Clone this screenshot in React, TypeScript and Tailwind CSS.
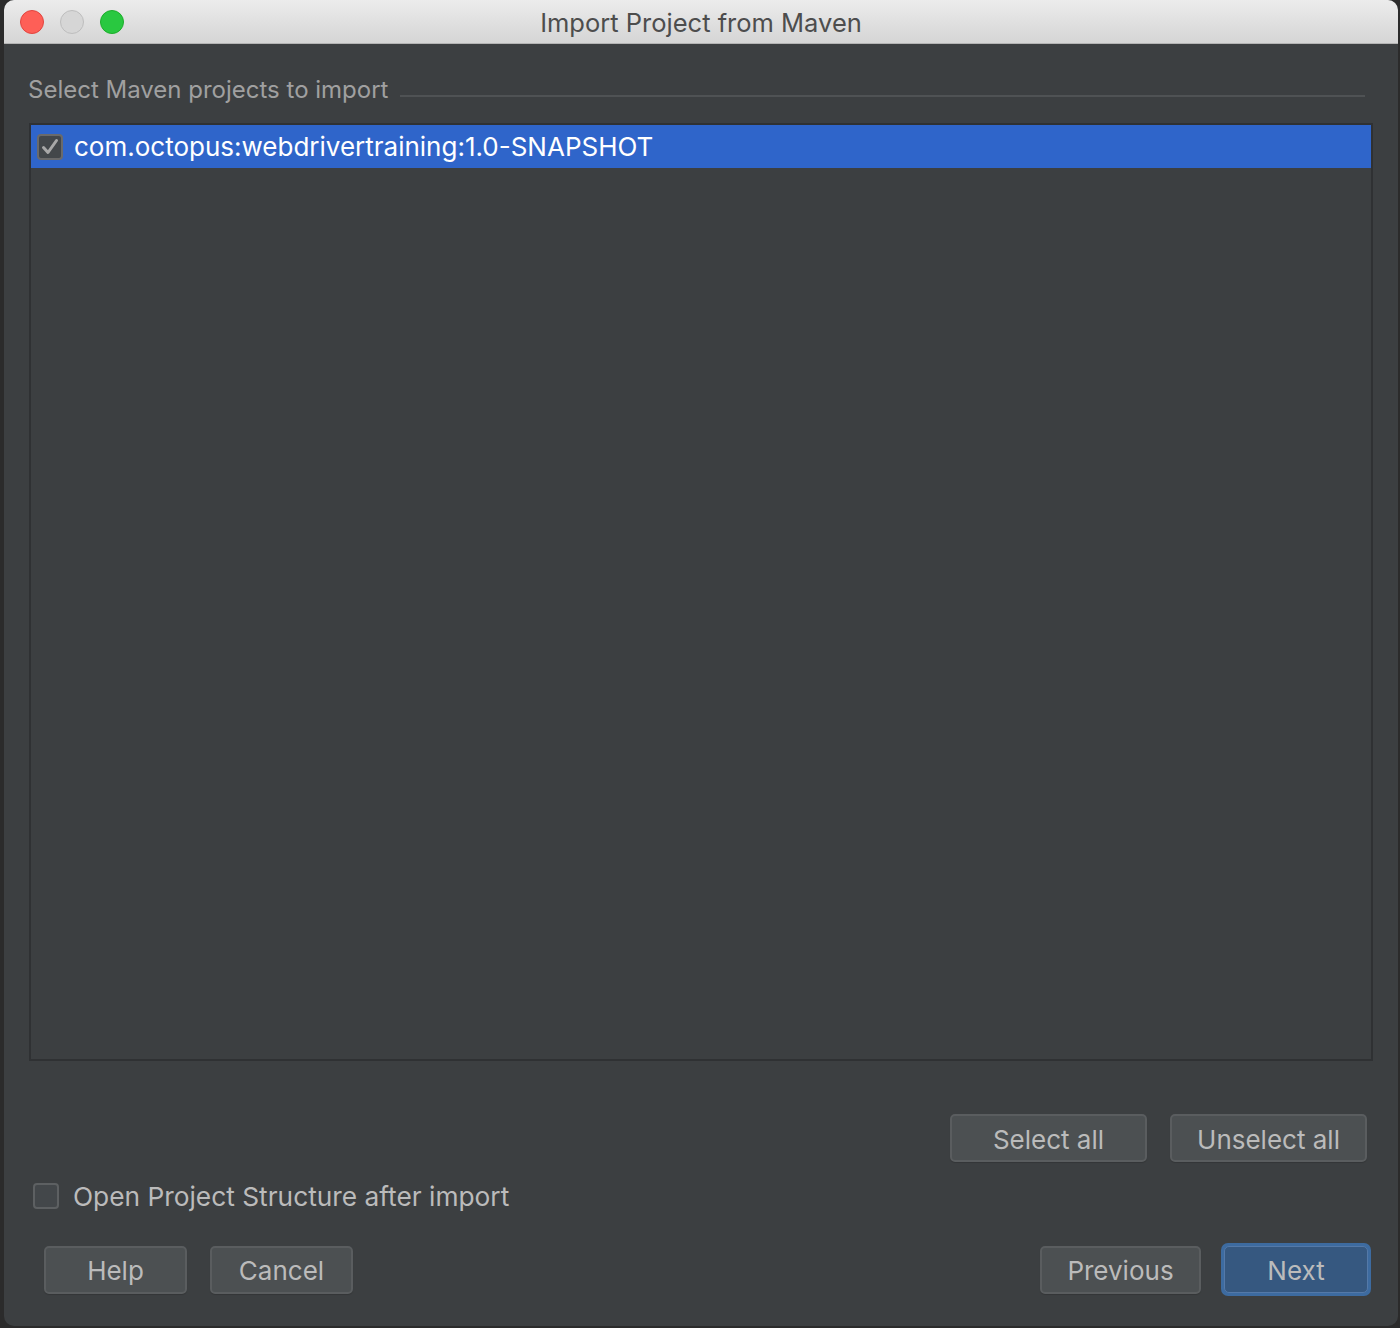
import React, { useState } from 'react';

const font = { fontFamily: 'Inter, "Noto Sans", "Liberation Sans", sans-serif' };

const Button = ({ label, width, primary }: { label: string; width: string; primary?: boolean }) => {
  if (primary) {
    return (
      <div className="rounded-[7px] bg-[#3d6ba0] p-[3px]">
        <button
          className={`${width} h-[47px] pt-[3px] rounded-[5px] border border-[#5479a8] bg-[#365880] text-[26px] text-[#bbbbbb] leading-none`}
        >
          {label}
        </button>
      </div>
    );
  }
  return (
    <button
      className={`${width} h-[48px] pt-[3px] rounded-[5px] border-2 border-[#5a5d5f] bg-[#4c5052] text-[26px] text-[#bbbbbb] leading-none shadow-[0_1px_1px_rgba(0,0,0,0.15)]`}
    >
      {label}
    </button>
  );
};

const Check = ({ checked }: { checked: boolean }) => (
  <div
    className={`w-[26px] h-[26px] rounded-[4px] border-2 flex items-center justify-center ${
      checked ? 'border-[#6a6a6a] bg-[#43474a]' : 'border-[#5d6062] bg-[#43474a]'
    }`}
  >
    {checked && (
      <svg width="18" height="18" viewBox="0 0 18 18">
        <path d="M2.5 9.5 L7 14.5 L15.5 2.5" fill="none" stroke="#a8a8a8" strokeWidth="3" strokeLinecap="round" strokeLinejoin="round" />
      </svg>
    )}
  </div>
);

export default function App() {
  const [openStructure] = useState(false);

  return (
    <div className="w-[1400px] h-[1328px] bg-[#2b2b2b] overflow-hidden" style={font}>
      <div className="ml-[4px] w-[1394px] h-[1326px] rounded-[10px] overflow-hidden bg-[#3c3f41] flex flex-col">
        {/* Title bar */}
        <div className="relative h-[44px] shrink-0 bg-gradient-to-b from-[#ececec] to-[#d5d5d5] border-b border-[#b4b4b4] flex items-center">
          <div className="flex items-center gap-[16px] pl-[16px]">
            <span className="w-[24px] h-[24px] rounded-full bg-[#fe5f57] border border-[#e1453f]" />
            <span className="w-[24px] h-[24px] rounded-full bg-[#d6d6d6] border border-[#bdbdbd]" />
            <span className="w-[24px] h-[24px] rounded-full bg-[#29c840] border border-[#1dad2b]" />
          </div>
          <div className="absolute inset-0 flex items-center justify-center text-[25.5px] text-[#4d4d4d] pt-[3px]">
            Import Project from Maven
          </div>
        </div>

        {/* Body */}
        <div className="flex-1 flex flex-col px-[25px]">
          <div className="mt-[31px] h-[30px] flex items-center">
            <span className="ml-[-1px] text-[24px] text-[#a0a0a0] leading-none">Select Maven projects to import</span>
            <div className="flex-1 h-[2px] bg-[#4f5254] ml-[12px] mr-[8px] mt-[12px]" />
          </div>

          <div className="mt-[18px] h-[938px] border-2 border-[#2f3133] bg-[#3c3f41]">
            <div className="h-[43px] bg-[#2f65ca] flex items-center pl-[6px] gap-[11px]">
              <Check checked />
              <span className="text-[26px] text-white leading-none">com.octopus:webdrivertraining:1.0-SNAPSHOT</span>
            </div>
          </div>

          <div className="mt-[53px] flex justify-end gap-[23px] pr-[6px]">
            <Button label="Select all" width="w-[197px]" />
            <Button label="Unselect all" width="w-[197px]" />
          </div>

          <div className="mt-[19px] flex items-center gap-[14px] ml-[4px]">
            <Check checked={openStructure} />
            <span className="text-[26.3px] text-[#bbbbbb] leading-none pt-[3px]">Open Project Structure after import</span>
          </div>

          <div className="mt-[33px] flex items-center">
            <div className="flex items-center gap-[23px] ml-[15px]">
              <Button label="Help" width="w-[143px]" />
              <Button label="Cancel" width="w-[143px]" />
            </div>
            <div className="ml-auto flex items-center gap-[20px] mr-[2px]">
              <Button label="Previous" width="w-[161px]" />
              <Button label="Next" width="w-[144px]" primary />
            </div>
          </div>
        </div>
      </div>
    </div>
  );
}
